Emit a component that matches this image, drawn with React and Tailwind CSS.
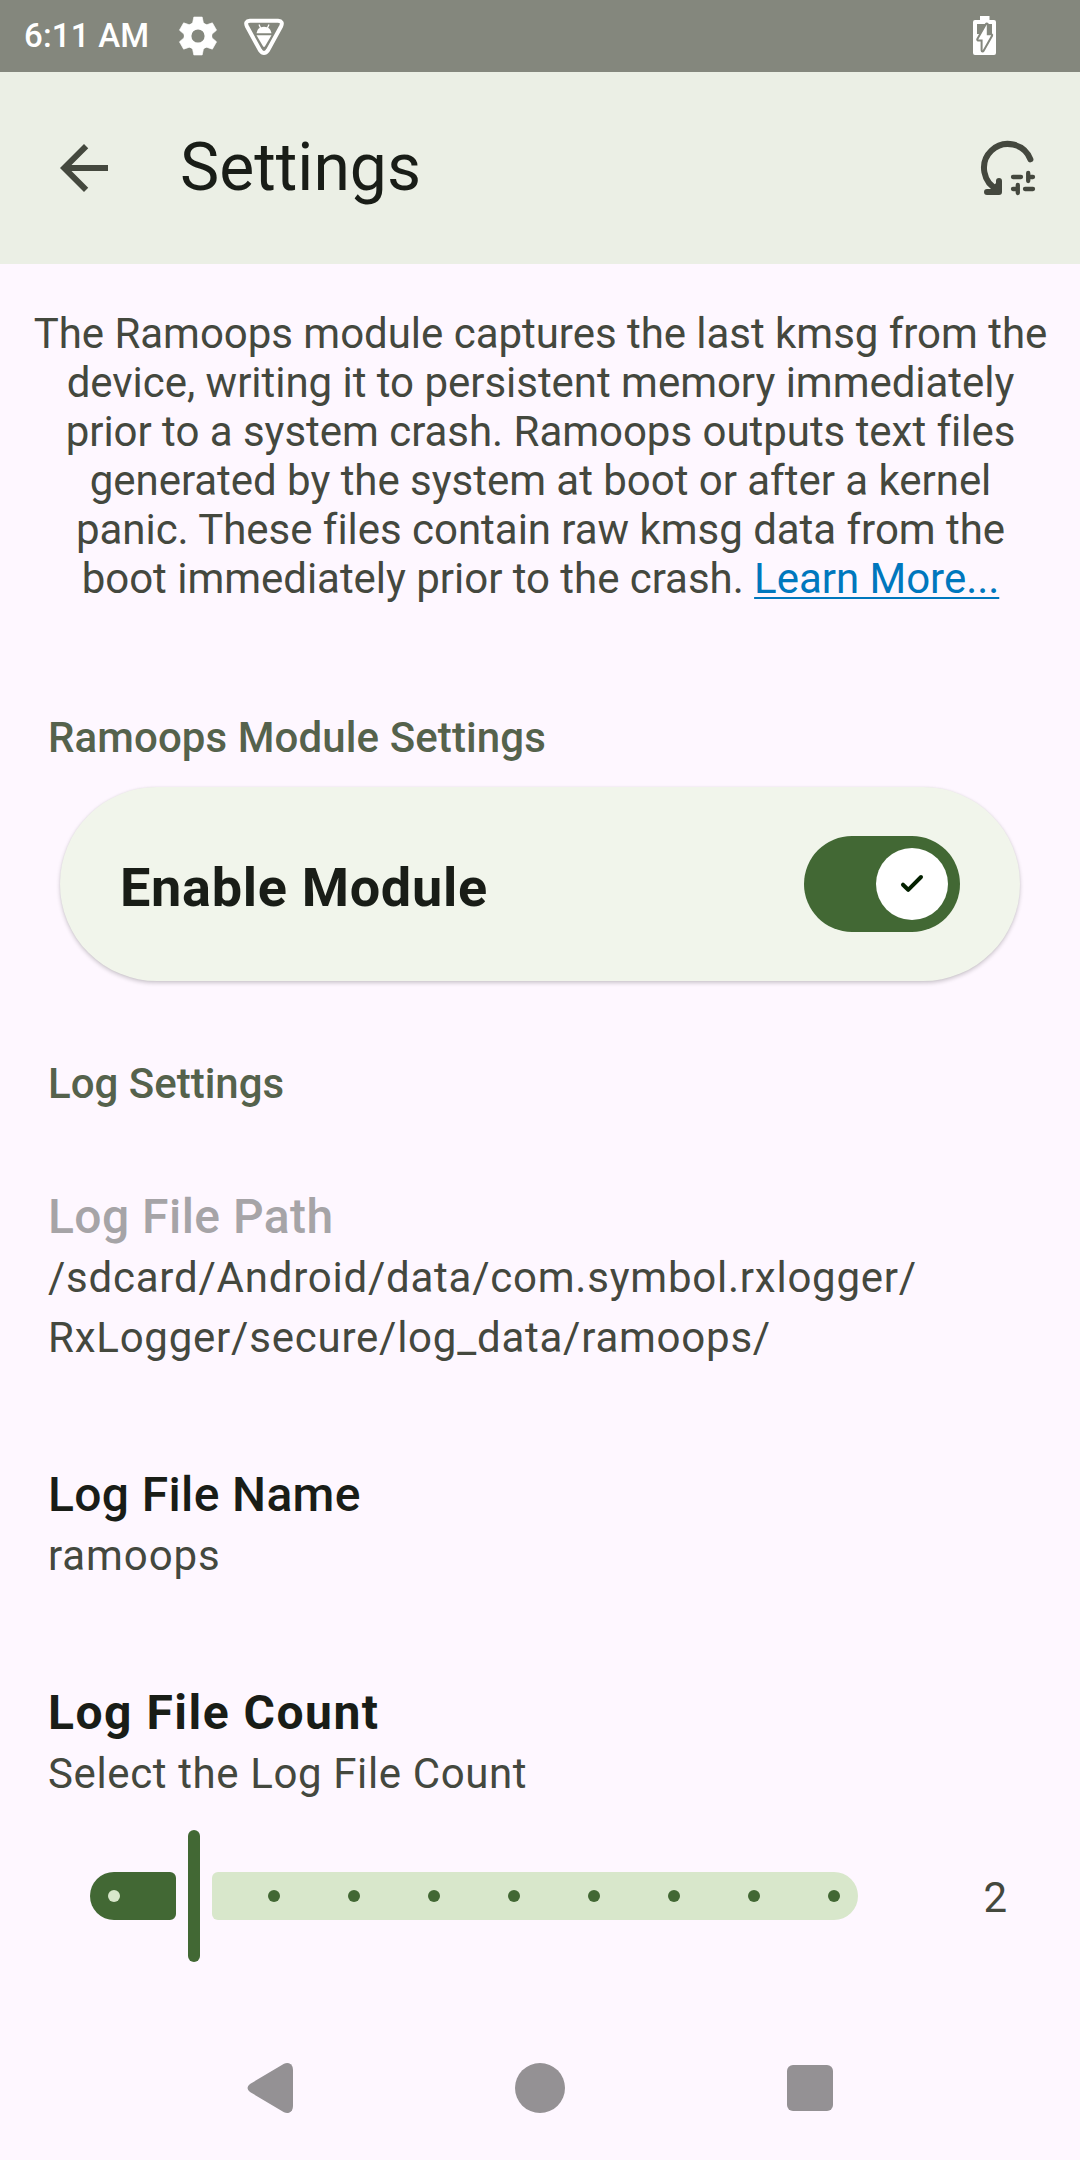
function BackArrow() {
  return (
    <svg className="size-[72px]" viewBox="0 0 24 24" fill="#44483E">
      <path d="M20 11H7.83l5.59-5.59L12 4l-8 8 8 8 1.41-1.41L7.83 13H20v-2z" />
    </svg>
  );
}

function RestoreDefaults() {
  return (
    <svg className="size-[72px]" viewBox="0 0 72 72" fill="none" stroke="#44483E" strokeLinecap="round" strokeLinejoin="round">
      <path strokeWidth="6" d="M26.500 58A24 24 0 1 1 58.400 27.300" />
      <path strokeWidth="6" d="M15 60H27V49" />
      <path d="M20 57H27V50L22 54z" fill="#44483E" strokeWidth="2" />
      <path strokeWidth="4.300" d="M41 45h8M56.200 41v8M56 45h5M41 57h5M45.800 53v8M53 57h8" />
    </svg>
  );
}

const TEETH = [0, 60, 120, 180, 240, 300];

function Gear() {
  return (
    <svg className="size-[46px]" viewBox="-23 -23 46 46">
      <circle r="10.400" fill="none" stroke="#fff" strokeWidth="7.600" />
      {TEETH.map((angle) => (
        <path key={angle} transform={`rotate(${angle})`} d="M-4.200 -19H4.200L5.400 -13.200L6.800 -11H-6.800L-5.400 -13.200z" fill="#fff" stroke="#fff" strokeWidth=".6" strokeLinejoin="round" />
      ))}
    </svg>
  );
}

function DebugShield() {
  return (
    <svg className="h-[38px] w-[42px]" viewBox="0 0 42 38" fill="none">
      <path d="M7 2.700H35Q40.600 3.200 38 8.500L25 32.300Q21 37.800 17 32.300L4 8.500Q1.400 3.200 7 2.700z" stroke="#fff" strokeWidth="4" strokeLinejoin="round" />
      <path d="M13.500 15.300Q14.200 9 21 8.800Q27.800 9 28.500 15.300z" fill="#fff" />
      <path d="M16 6.500L17.600 10M26 6.500L24.400 10" stroke="#fff" strokeWidth="1.300" />
      <path d="M13.500 17.200H28.500L22 28.300Q21 29.500 20 28.300z" fill="#fff" />
    </svg>
  );
}

function Battery() {
  return (
    <svg className="h-[39px] w-[23px]" viewBox="0 0 23 39">
      <path d="M7 0H16.500V4H21Q23 4 23 6V37Q23 39 21 39H2Q0 39 0 37V6Q0 4 2 4H7z" fill="#fff" />
      <path d="M4 8H19V18H4z" fill="#84877D" />
      <path d="M13.800 8.500L5.200 23.500H9.600V34.500L18.200 19.200H13.800z" fill="#fff" stroke="#84877D" strokeWidth="4" strokeLinejoin="round" />
      <path d="M13.800 8.500L5.200 23.500H9.600V34.500L18.200 19.200H13.800z" fill="#fff" />
    </svg>
  );
}

function Section({ children, className }) {
  return <h2 className={`px-12 text-[42px] leading-[60px] font-medium text-[#55624C] ${className}`}>{children}</h2>;
}

function Preference({ title, titleClass, bodyClass, children, className }) {
  return (
    <div className={`flex flex-col gap-px px-12 ${className}`}>
      <div className={`text-[48px] leading-[60px] ${titleClass}`}>{title}</div>
      <div className={`text-[42px] leading-[60px] text-[#44483E] ${bodyClass}`}>{children}</div>
    </div>
  );
}

const STOPS = [3, 4, 5, 6, 7, 8, 9, 10];

export default function App() {
  return (
    <div className="flex h-[2160px] w-[1080px] flex-col overflow-hidden bg-[#FEF7FF] font-['Roboto',sans-serif]">
      <div className="flex h-[72px] shrink-0 items-center bg-[#84877D] pr-[84px] pl-6 text-white">
        <span className="w-[151px] text-[33px] leading-[40px] font-medium tracking-[0.2px] whitespace-nowrap">6:11 AM</span>
        <Gear />
        <span className="mt-[2px] ml-[22px]"><DebugShield /></span>
        <span className="mb-px ml-auto"><Battery /></span>
      </div>

      <header className="flex h-[192px] shrink-0 items-center bg-[#EBEFE5] pr-9 pl-12">
        <BackArrow />
        <h1 className="ml-[60px] text-[66px] leading-[84px] text-[#191D17]">Settings</h1>
        <span className="ml-auto"><RestoreDefaults /></span>
      </header>

      <p className="mt-[45px] pl-px text-center text-[42px] leading-[49px] tracking-[-0.03px] whitespace-nowrap text-[#44483E]">
        The Ramoops module captures the last kmsg from the<br />
        device, writing it to persistent memory immediately<br />
        prior to a system crash. Ramoops outputs text files<br />
        generated by the system at boot or after a kernel<br />
        panic. These files contain raw kmsg data from the<br />
        boot immediately prior to the crash.{" "}
        <a className="text-[#0077BD] underline decoration-[2px] underline-offset-[4px]">Learn More...</a>
      </p>

      <Section className="mt-[105px] tracking-[0.1px]">Ramoops Module Settings</Section>

      <div className="mx-[60px] mt-[19px] flex h-[194px] shrink-0 items-center justify-between rounded-[97px] bg-[#F1F5EB] pr-[60px] pl-[60px] shadow-[0_2px_4px_rgba(0,0,0,0.2),0_0_2px_rgba(0,0,0,0.06)]">
        <span className="pt-[7px] text-[54px] leading-[64px] font-bold tracking-[0.7px] text-[#191D17]">Enable Module</span>
        <div className="flex h-24 w-[156px] items-center justify-end rounded-full bg-[#426834] pr-3">
          <div className="flex size-[72px] items-center justify-center rounded-full bg-white">
            <svg className="size-[48px]" viewBox="0 0 48 48" fill="none" stroke="#042100" strokeWidth="4" strokeLinecap="round" strokeLinejoin="round">
              <path d="M15 24.700L20.200 29.800L33 17" />
            </svg>
          </div>
        </div>
      </div>

      <Section className="mt-[73px]">Log Settings</Section>

      <Preference className="mt-[73px]" title="Log File Path" titleClass="font-medium tracking-[0.45px] text-[#A6A4A7]" bodyClass="tracking-[0.77px]">
        /sdcard/Android/data/com.symbol.rxlogger/<br />RxLogger/secure/log_data/ramoops/
      </Preference>
      <Preference className="mt-[97px]" title="Log File Name" titleClass="font-medium tracking-[0.35px] text-[#191D17]" bodyClass="tracking-[0.9px]">
        ramoops
      </Preference>
      <Preference className="mt-[97px]" title="Log File Count" titleClass="font-bold tracking-[1.5px] text-[#191D17]" bodyClass="tracking-[0.62px]">
        Select the Log File Count
      </Preference>

      <div className="mt-[26px] flex h-[132px] shrink-0 items-center pr-[73px] pl-[90px]">
        <div className="flex h-12 w-[86px] items-center rounded-l-[24px] rounded-r-[6px] bg-[#426834] pl-[18px]">
          <div className="size-3 rounded-full bg-[#D8E7CB]" />
        </div>
        <div className="mx-3 h-[132px] w-3 rounded-full bg-[#426834]" />
        <div className="flex h-12 w-[646px] items-center justify-between rounded-l-[6px] rounded-r-[24px] bg-[#D8E7CB] pr-[18px] pl-[56px]">
          {STOPS.map((n) => (
            <div key={n} className="size-3 rounded-full bg-[#426834]" />
          ))}
        </div>
        <span className="ml-auto pt-[3px] text-[42px] leading-[60px] text-[#44483E]">2</span>
      </div>

      <nav className="mt-auto flex h-36 shrink-0 items-center justify-between pr-[247px] pl-[247px]">
        <svg className="h-[52px] w-[46px]" viewBox="0 0 46 52" fill="#949194">
          <path d="M37 1.800Q39.500 .5 42 1.300Q46 3 46 8V44Q46 49 42 50.700Q39.500 51.500 37 50.200L3 30Q-2 26 3 22z" />
        </svg>
        <div className="size-[50px] rounded-full bg-[#949194]" />
        <div className="size-[46px] rounded-[6px] bg-[#949194]" />
      </nav>
    </div>
  );
}
